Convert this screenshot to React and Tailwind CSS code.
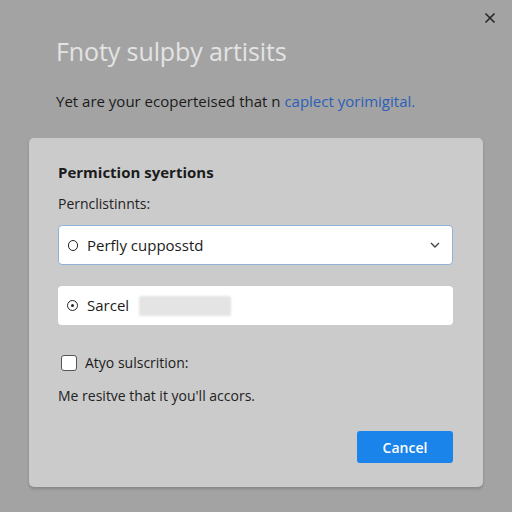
export default function App() {
  return (
    <div
      className="w-[512px] h-[512px] bg-[#a3a3a3] relative overflow-hidden text-[#1b1b1b]"
      style={{ fontFamily: '"Open Sans", "Liberation Sans", sans-serif' }}
    >
      <button className="absolute top-[10px] right-[14px] w-4 h-4 flex items-center justify-center text-[#222]">
        <svg width="12" height="12" viewBox="0 0 12 12" fill="none" stroke="currentColor" strokeWidth="1.5">
          <path d="M1.5 1.5L10.5 10.5M10.5 1.5L1.5 10.5" />
        </svg>
      </button>

      <div className="pt-[34px] pl-[56px]">
        <h1 className="text-[25px] leading-[34px] text-[#e3e3e3] tracking-[-0.1px]">Fnoty sulpby artisits</h1>
        <p className="mt-[23px] text-[15px] leading-[20px]">
          Yet are your ecoperteised that n <span className="text-[#2b5fb8]">caplect yorimigital.</span>
        </p>
      </div>

      <div className="absolute left-[29px] top-[138px] w-[454px] h-[349px] bg-[#cbcbcb] rounded-[5px] shadow-[0_2px_3px_rgba(0,0,0,0.18)] px-[29px] pt-[24px]">
        <h2 className="text-[15px] leading-[20px] font-bold">Permiction syertions</h2>
        <p className="mt-[12px] text-[14px] leading-[20px] text-[#222]">Pernclistinnts:</p>

        <div className="mt-[11px] h-[40px] w-[395px] bg-white border border-[#8fb2d6] rounded-[4px] flex items-center pl-[9px] pr-[12px]">
          <span className="w-[10px] h-[11px] rounded-full border-[1.6px] border-[#222]"></span>
          <span className="ml-[9px] text-[15px]">Perfly cupposstd</span>
          <svg className="ml-auto" width="10" height="6" viewBox="0 0 10 6" fill="none" stroke="#444" strokeWidth="1.4">
            <path d="M1 1l4 4 4-4" />
          </svg>
        </div>

        <div className="mt-[21px] h-[39px] w-[395px] bg-white rounded-[4px] flex items-center pl-[9px]">
          <span className="w-[11px] h-[11px] rounded-full border-[1.5px] border-[#222] flex items-center justify-center">
            <span className="w-[3px] h-[3px] rounded-full bg-[#222]"></span>
          </span>
          <span className="ml-[9px] text-[15px]">Sarcel</span>
          <span className="ml-[10px] w-[92px] h-[20px] bg-[#e4e4e4] rounded-[2px] blur-[1px]"></span>
        </div>

        <div className="mt-[27px] flex items-center">
          <span className="ml-[3px] w-[16px] h-[16px] bg-white border border-[#555] rounded-[3px]"></span>
          <span className="ml-[8px] text-[14px]">Atyo sulscrition:</span>
        </div>
        <p className="mt-[12px] text-[14px] text-[#222]">Me resitve that it you'll accors.</p>

        <div className="mt-[25px] flex justify-end w-[395px]">
          <button className="w-[96px] h-[32px] bg-[#1a84ea] rounded-[3px] text-white text-[14px] font-semibold">
            Cancel
          </button>
        </div>
      </div>
    </div>
  );
}
